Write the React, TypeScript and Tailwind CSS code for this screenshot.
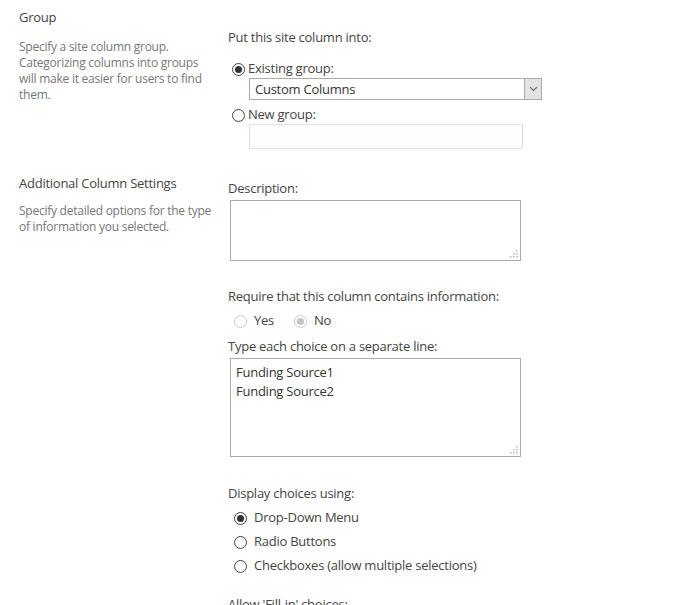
import React from "react";

const font = { fontFamily: '"Open Sans", "Noto Sans", Arial, sans-serif' };

function Radio({ checked, muted }: { checked?: boolean; muted?: boolean }) {
	return (
		<span
			className={
				"flex h-[13px] w-[13px] shrink-0 items-center justify-center rounded-full border bg-white " +
				(muted ? "border-[#c8c8c8]" : "border-[#444]")
			}
		>
			{checked && (
				<span
					className={
						"h-[7px] w-[7px] rounded-full " + (muted ? "bg-[#c4c4c4]" : "bg-[#333]")
					}
				/>
			)}
		</span>
	);
}

function Grip() {
	return (
		<svg width="8" height="8" viewBox="0 0 8 8" className="absolute bottom-[2px] right-[2px]">
			<rect x="6" y="0" width="1.5" height="1.5" fill="#b5b5b5" />
			<rect x="3" y="3" width="1.5" height="1.5" fill="#b5b5b5" />
			<rect x="6" y="3" width="1.5" height="1.5" fill="#b5b5b5" />
			<rect x="0" y="6" width="1.5" height="1.5" fill="#b5b5b5" />
			<rect x="3" y="6" width="1.5" height="1.5" fill="#b5b5b5" />
			<rect x="6" y="6" width="1.5" height="1.5" fill="#b5b5b5" />
		</svg>
	);
}

function TextBox({ height, lines }: { height: string; lines?: string[] }) {
	return (
		<div className={"relative ml-[2px] w-[291px] border border-[#ababab] bg-white px-[5px] pt-[4px] " + height}>
			{lines?.map((l) => (
				<div key={l} className="text-[13px] leading-[19px] text-[#333]">
					{l}
				</div>
			))}
			<Grip />
		</div>
	);
}

function Option({ label, checked }: { label: string; checked?: boolean }) {
	return (
		<div className="flex h-[24px] items-center pl-[6px]">
			<Radio checked={checked} />
			<span className="ml-[7px] text-[13px] text-[#444]">{label}</span>
		</div>
	);
}

export default function App() {
	return (
		<div
			className="min-h-[605px] w-[686px] overflow-hidden bg-white pl-[19px] tracking-[-0.25px]"
			style={font}
		>
			{/* ── Group ── */}
			<div className="flex">
				<div className="w-[209px] shrink-0 pt-[8px]">
					<h3 className="text-[13px] leading-[18px] text-[#444]">Group</h3>
					<p className="mt-[13px] text-[12px] leading-[16px] text-[#777]">
						Specify a site column group.
						<br />
						Categorizing columns into groups
						<br />
						will make it easier for users to find
						<br />
						them.
					</p>
				</div>
				<div className="pt-[28px]">
					<p className="text-[13px] leading-[18px] text-[#444]">Put this site column into:</p>
					<div className="mt-[14px] flex h-[18px] items-center pl-[4px]">
						<Radio checked />
						<span className="ml-[3px] text-[13px] text-[#444]">Existing group:</span>
					</div>
					<div className="ml-[21px] flex h-[22px] w-[293px] border border-[#ababab] bg-white">
						<span className="flex-1 pl-[5px] text-[13px] leading-[20px] text-[#333]">Custom Columns</span>
						<span className="flex w-[17px] items-center justify-center border-l border-[#ababab] bg-[#e3e3e3]">
							<svg width="9" height="6" viewBox="0 0 9 6">
								<path d="M1 1.2 L4.5 4.5 L8 1.2" fill="none" stroke="#666" strokeWidth="1.1" />
							</svg>
						</span>
					</div>
					<div className="mt-[6px] flex h-[18px] items-center pl-[4px]">
						<Radio />
						<span className="ml-[3px] text-[13px] text-[#444]">New group:</span>
					</div>
					<div className="ml-[21px] h-[25px] w-[274px] border border-[#e1e1e1] bg-[#fdfdfd]" />
				</div>
			</div>

			{/* ── Additional Column Settings ── */}
			<div className="flex">
				<div className="w-[209px] shrink-0 pt-[25px]">
					<h3 className="text-[13px] leading-[18px] text-[#444]">Additional Column Settings</h3>
					<p className="mt-[11px] text-[12px] leading-[16px] text-[#777]">
						Specify detailed options for the type
						<br />
						of information you selected.
					</p>
				</div>
				<div className="pt-[30px]">
					<p className="text-[13px] leading-[18px] text-[#444]">Description:</p>
					<div className="mt-[3px]">
						<TextBox height="h-[61px]" />
					</div>
					<p className="mt-[26px] text-[13px] leading-[18px] text-[#444]">
						Require that this column contains information:
					</p>
					<div className="mt-[7px] flex h-[18px] items-center pl-[6px]">
						<Radio muted />
						<span className="ml-[7px] text-[13px] text-[#444]">Yes</span>
						<span className="ml-[20px]">
							<Radio muted checked />
						</span>
						<span className="ml-[7px] text-[13px] text-[#444]">No</span>
					</div>
					<p className="mt-[7px] text-[13px] leading-[18px] text-[#444]">
						Type each choice on a separate line:
					</p>
					<div className="mt-[3px]">
						<TextBox height="h-[99px]" lines={["Funding Source1", "Funding Source2"]} />
					</div>
					<p className="mt-[27px] text-[13px] leading-[18px] text-[#444]">Display choices using:</p>
					<div className="mt-[4px]">
						<Option label="Drop-Down Menu" checked />
						<Option label="Radio Buttons" />
						<Option label="Checkboxes (allow multiple selections)" />
					</div>
					<p className="mt-[17px] text-[13px] leading-[18px] text-[#444]">Allow 'Fill-in' choices:</p>
				</div>
			</div>
		</div>
	);
}
